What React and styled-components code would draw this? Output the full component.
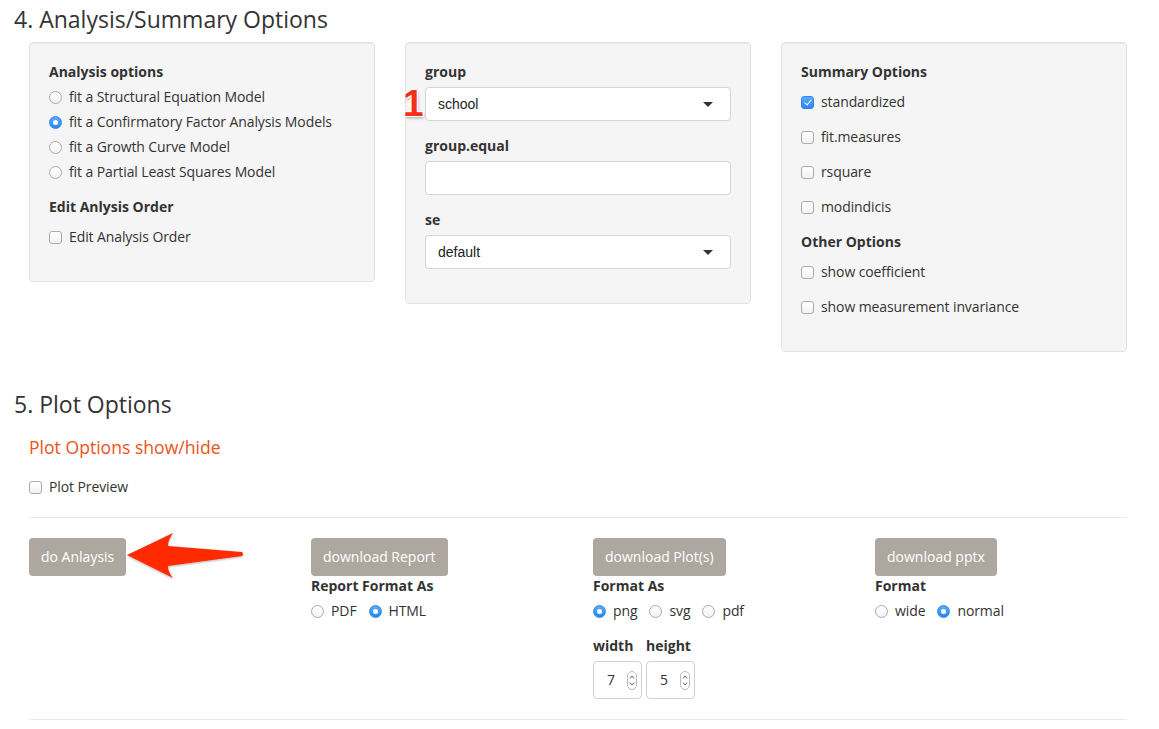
import styled, { createGlobalStyle } from "styled-components";

const GlobalStyle = createGlobalStyle`
  body {
    margin: 0;
    background: #fff;
    font-family: "Open Sans", "DejaVu Sans", sans-serif;
    font-size: 14px;
    line-height: 20px;
    color: #333;
  }
`;

const Mark = ({ round, checked }) => <Box $round={round} $checked={checked} />;

const Choice = ({ round, checked, children }) => (
  <OptionRow>
    <Mark round={round} checked={checked} />
    <span>{children}</span>
  </OptionRow>
);

const Caret = () => (
  <svg width="10" height="5" viewBox="0 0 10 5">
    <path d="M0 0 L10 0 L5 5 Z" fill="#333" />
  </svg>
);

const Spinner = () => (
  <svg width="10" height="19" viewBox="0 0 10 19">
    <rect x="0.5" y="0.5" width="9" height="18" rx="4.5" fill="#fff" stroke="#b9b9b9" />
    <path d="M3 7.5 L5 5 L7 7.5" fill="none" stroke="#666" strokeWidth="1" />
    <path d="M3 11.5 L5 14 L7 11.5" fill="none" stroke="#666" strokeWidth="1" />
  </svg>
);

const Arrow = () => (
  <ArrowSvg width="140" height="60" viewBox="0 0 140 60">
    <defs>
      <filter id="sh" x="-10%" y="-10%" width="130%" height="140%">
        <feDropShadow dx="0" dy="1" stdDeviation="1" floodColor="#000" floodOpacity="0.3" />
      </filter>
    </defs>
    <path
      d="M3 27 L49 5 Q44 12 44 18 L118 24 Q120 26 118 28 L44 38 Q44 44 49 50 Z"
      fill="#ff2a00"
      filter="url(#sh)"
    />
  </ArrowSvg>
);

const App = () => {
  return (
    <Page>
      <GlobalStyle />
      <SectionTitle>4. Analysis/Summary Options</SectionTitle>
      <WellRow>
        <Col>
          <Well>
            <FormGroup>
              <GroupLabel>Analysis options</GroupLabel>
              <RadioList>
                <Choice round>fit a Structural Equation Model</Choice>
                <Choice round checked>
                  fit a Confirmatory Factor Analysis Models
                </Choice>
                <Choice round>fit a Growth Curve Model</Choice>
                <Choice round>fit a Partial Least Squares Model</Choice>
              </RadioList>
            </FormGroup>
            <FormGroup>
              <GroupLabel>Edit Anlysis Order</GroupLabel>
              <CheckList>
                <Choice>Edit Analysis Order</Choice>
              </CheckList>
            </FormGroup>
          </Well>
        </Col>
        <Col>
          <Well>
            <FormGroup>
              <GroupLabel>group</GroupLabel>
              <Select>
                <span>school</span>
                <Caret />
              </Select>
              <Badge>1</Badge>
            </FormGroup>
            <FormGroup>
              <GroupLabel>group.equal</GroupLabel>
              <TextInput />
            </FormGroup>
            <FormGroup>
              <GroupLabel>se</GroupLabel>
              <Select>
                <span>default</span>
                <Caret />
              </Select>
            </FormGroup>
          </Well>
        </Col>
        <Col>
          <Well>
            <FormGroup>
              <GroupLabel>Summary Options</GroupLabel>
              <CheckList>
                <Choice checked>standardized</Choice>
                <Choice>fit.measures</Choice>
                <Choice>rsquare</Choice>
                <Choice>modindicis</Choice>
              </CheckList>
            </FormGroup>
            <FormGroup>
              <GroupLabel>Other Options</GroupLabel>
              <CheckList>
                <Choice>show coefficient</Choice>
                <Choice>show measurement invariance</Choice>
              </CheckList>
            </FormGroup>
          </Well>
        </Col>
      </WellRow>

      <SectionTitle $spaced>5. Plot Options</SectionTitle>
      <Col>
        <SubTitle>Plot Options show/hide</SubTitle>
        <PreviewRow>
          <Choice>Plot Preview</Choice>
        </PreviewRow>
        <Rule />
      </Col>
      <ButtonRow>
        <Col>
          <Button>do Anlaysis</Button>
        </Col>
        <Col>
          <Button>download Report</Button>
          <GroupLabel>Report Format As</GroupLabel>
          <InlineChoices>
            <Choice round>PDF</Choice>
            <Choice round checked>
              HTML
            </Choice>
          </InlineChoices>
        </Col>
        <Col>
          <Button>download Plot(s)</Button>
          <GroupLabel>Format As</GroupLabel>
          <InlineChoices>
            <Choice round checked>
              png
            </Choice>
            <Choice round>svg</Choice>
            <Choice round>pdf</Choice>
          </InlineChoices>
          <SizeRow>
            <SizeField>
              <GroupLabel>width</GroupLabel>
              <NumberBox>
                <span>7</span>
                <Spinner />
              </NumberBox>
            </SizeField>
            <SizeField>
              <GroupLabel>height</GroupLabel>
              <NumberBox>
                <span>5</span>
                <Spinner />
              </NumberBox>
            </SizeField>
          </SizeRow>
        </Col>
        <Col>
          <Button>download pptx</Button>
          <GroupLabel>Format</GroupLabel>
          <InlineChoices>
            <Choice round>wide</Choice>
            <Choice round checked>
              normal
            </Choice>
          </InlineChoices>
        </Col>
        <Arrow />
      </ButtonRow>
      <Col>
        <Rule $last />
      </Col>
    </Page>
  );
};

const Page = styled.div`
  width: 1128px;
  padding: 6px 0 0 14px;
`;

const SectionTitle = styled.h3`
  margin: ${(p) => (p.$spaced ? "39px" : "0")} 0 10px;
  font-size: 23px;
  font-weight: 500;
  line-height: 26px;
  color: #333;
`;

const WellRow = styled.div`
  display: grid;
  grid-template-columns: repeat(3, 376px);
  align-items: start;
`;

const Col = styled.div`
  padding: 0 15px;
`;

const Well = styled.div`
  background: #f5f5f5;
  border: 1px solid #e3e3e3;
  border-radius: 4px;
  box-shadow: inset 0 1px 1px rgba(0, 0, 0, 0.05);
  padding: 19px;
`;

const FormGroup = styled.div`
  position: relative;
  margin-bottom: 15px;
`;

const GroupLabel = styled.div`
  font-weight: 700;
  line-height: 20px;
  margin-bottom: 5px;
`;

const RadioList = styled.div`
  display: flex;
  flex-direction: column;
  gap: 5px;
`;

const CheckList = styled.div`
  display: flex;
  flex-direction: column;
  gap: 15px;
  margin-top: 10px;
`;

const OptionRow = styled.label`
  display: flex;
  align-items: center;
  gap: 7px;
  height: 20px;
  white-space: nowrap;
  letter-spacing: -0.1px;
`;

const Box = styled.span`
  position: relative;
  flex: none;
  box-sizing: border-box;
  width: 13px;
  height: 13px;
  border-radius: ${(p) => (p.$round ? "50%" : "3px")};
  border: 1px solid ${(p) => (p.$checked ? "#2f86f0" : "#aaaaaa")};
  background: ${(p) =>
    p.$checked ? "linear-gradient(#5aabff, #2b87f5)" : "linear-gradient(#fff, #f2f2f2)"};
  &::after {
    content: "";
    position: absolute;
    display: ${(p) => (p.$checked ? "block" : "none")};
    ${(p) =>
      p.$round
        ? `left: 3px; top: 3px; width: 5px; height: 5px; border-radius: 50%; background: #fff;`
        : `left: 3.5px; top: 1px; width: 3px; height: 6px; border: solid #fff; border-width: 0 1.5px 1.5px 0; transform: rotate(40deg);`}
  }
`;

const Select = styled.div`
  display: flex;
  align-items: center;
  justify-content: space-between;
  box-sizing: border-box;
  height: 34px;
  padding: 0 17px 0 12px;
  background: #fff;
  border: 1px solid #d4d4d4;
  border-radius: 4px;
  font-family: "Liberation Sans", Arial, sans-serif;
  font-size: 14px;
  color: #222;
`;

const TextInput = styled.div`
  box-sizing: border-box;
  height: 34px;
  background: #fff;
  border: 1px solid #d4d4d4;
  border-radius: 4px;
`;

const Badge = styled.span`
  position: absolute;
  left: -22px;
  top: 23px;
  font-family: "Liberation Sans", Arial, sans-serif;
  font-weight: 700;
  font-size: 37px;
  line-height: 1;
  color: #f4301c;
  text-shadow: -1px -1px 0 #fff, 1px -1px 0 #fff, -1px 1px 0 #fff, 1px 1px 0 #fff,
    0 0 2px #fff, 1px 2px 3px rgba(0, 0, 0, 0.35);
`;

const SubTitle = styled.h4`
  margin: 20px 0 0;
  font-size: 17.6px;
  font-weight: 500;
  line-height: 20px;
  color: #e95420;
`;

const PreviewRow = styled.div`
  margin-top: 20px;
`;

const Rule = styled.hr`
  margin: ${(p) => (p.$last ? "20px 0 0" : "20px 0")};
  border: 0;
  border-top: 1px solid #eaeaea;
`;

const ButtonRow = styled.div`
  position: relative;
  display: grid;
  grid-template-columns: repeat(4, 282px);
  align-items: start;
`;

const Button = styled.button`
  display: block;
  height: 38px;
  padding: 0 12px;
  border: 0;
  border-radius: 4px;
  background: #aea79f;
  color: #fff;
  font-family: inherit;
  font-size: 14px;
  line-height: 38px;
`;

const InlineChoices = styled.div`
  display: flex;
  gap: 12px;
`;

const SizeRow = styled.div`
  display: flex;
  gap: 4px;
  margin-top: 15px;
`;

const SizeField = styled.div`
  width: 49px;
`;

const NumberBox = styled.div`
  display: flex;
  align-items: center;
  justify-content: space-between;
  box-sizing: border-box;
  height: 38px;
  padding: 0 4px 0 13px;
  border: 1px solid #d0d0d0;
  border-radius: 4px;
  font-size: 14px;
`;

const ArrowSvg = styled.svg`
  position: absolute;
  left: 110px;
  top: -10px;
`;

export default App;
